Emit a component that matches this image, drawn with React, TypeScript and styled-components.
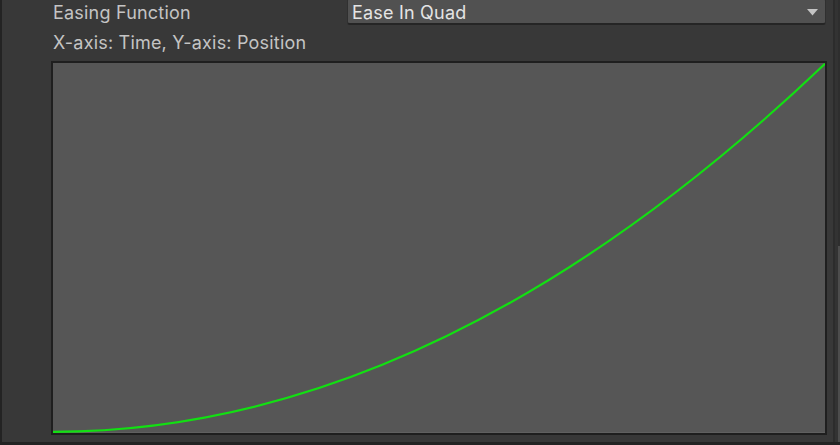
import React from "react";
import styled, { createGlobalStyle } from "styled-components";

const Global = createGlobalStyle`
  html, body { margin: 0; padding: 0; background: #383838; }
  body { width: 840px; height: 445px; overflow: hidden; }
`;

const Root = styled.div`
  width: 840px;
  height: 445px;
  display: flex;
  flex-direction: column;
  background: #383838;
  font-family: Inter, "Noto Sans", sans-serif;
`;

const Body = styled.div`
  flex: 1;
  display: flex;
  min-height: 0;
`;

const LeftEdge = styled.div`
  width: 2px;
  background: #232323;
`;

const Main = styled.div`
  flex: 1;
  display: flex;
  flex-direction: column;
  padding: 0 6px 0 49px;
  min-width: 0;
`;

const FieldRow = styled.div`
  height: 25px;
  display: flex;
  align-items: center;
`;

const Label = styled.div<{ $width?: number }>`
  width: ${(p) => (p.$width ? `${p.$width}px` : "auto")};
  padding: 1px 0 0 2px;
  box-sizing: border-box;
  color: #c4c4c4;
  font-size: 18px;
  letter-spacing: 0.2px;
  line-height: 24px;
  white-space: nowrap;
`;

const Dropdown = styled.div`
  flex: 1;
  margin: -2px 1px 0 0;
  height: 27px;
  box-sizing: border-box;
  display: flex;
  align-items: center;
  justify-content: space-between;
  padding: 2px 7px 0 4px;
  background: #515151;
  border: 1px solid #303030;
  border-bottom: 2px solid #252525;
  border-radius: 3px;
  color: #e4e4e4;
  font-size: 18px;
  letter-spacing: 0.2px;
`;

const Arrow = styled.svg`
  width: 11px;
  height: 7px;
`;

const Caption = styled(Label)`
  margin-top: 5px;
`;

const Graph = styled.div`
  margin-top: 6px;
  height: 374px;
  box-sizing: border-box;
  border: 2px solid #1f1f1f;
  background: #565656;
  box-shadow: inset 0 -1px 0 #606060;
  position: relative;
`;

const Curve = styled.svg`
  position: absolute;
  inset: 0;
  width: 100%;
  height: 100%;
  display: block;
`;

const RightGutter = styled.div`
  width: 7px;
  display: flex;
`;

const Divider = styled.div<{ $w: number; $c: string }>`
  width: ${(p) => p.$w}px;
  background: ${(p) => p.$c};
`;

const Track = styled.div`
  width: 2px;
  display: flex;
  flex-direction: column;
  background: #2e2e2e;
`;

const Thumb = styled.div`
  margin-top: 246px;
  flex: 1;
  background: #4d4d4d;
`;

const BottomEdge = styled.div`
  height: 3px;
  background: #232323;
`;

export default function App() {
  const W = 772;
  const H = 370;
  const top = 0.8;
  const bot = H - 1.2;
  return (
    <Root>
      <Global />
      <Body>
        <LeftEdge />
        <Main>
          <FieldRow>
            <Label $width={296}>Easing Function</Label>
            <Dropdown>
              <span>Ease In Quad</span>
              <Arrow viewBox="0 0 11 7">
                <path d="M0 0 H11 L5.5 6.5 Z" fill="#c4c4c4" />
              </Arrow>
            </Dropdown>
          </FieldRow>
          <Caption>X-axis: Time, Y-axis: Position</Caption>
          <Graph>
            <Curve viewBox={`0 0 ${W} ${H}`} preserveAspectRatio="none">
              <path
                d={`M0 ${bot} Q ${W / 2} ${bot} ${W} ${top}`}
                fill="none"
                stroke="#12e012"
                strokeWidth={2.2}
              />
            </Curve>
          </Graph>
        </Main>
        <RightGutter>
          <Divider $w={2} $c="#2c2c2c" />
          <Divider $w={3} $c="#333333" />
          <Track>
            <Thumb />
          </Track>
        </RightGutter>
      </Body>
      <BottomEdge />
    </Root>
  );
}
